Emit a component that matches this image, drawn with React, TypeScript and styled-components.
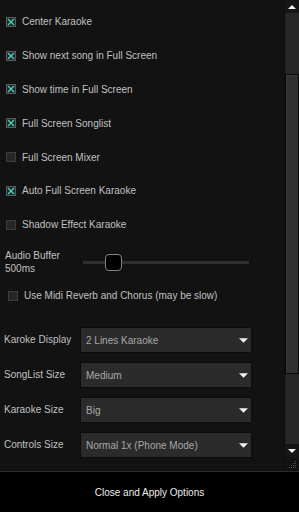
import React from 'react';
import styled, { createGlobalStyle } from 'styled-components';

const GlobalStyle = createGlobalStyle`
  html, body {
    margin: 0;
    padding: 0;
    background: #121212;
  }
  body {
    font-family: "Liberation Sans", Arial, sans-serif;
    font-size: 10px;
  }
`;

const Page = styled.div`
  width: 299px;
  height: 512px;
  display: flex;
  flex-direction: column;
  background: #121212;
  overflow: hidden;
`;

const Main = styled.div`
  flex: 1;
  display: flex;
  min-height: 0;
`;

const Content = styled.div`
  flex: 1;
  display: flex;
  flex-direction: column;
  padding-top: 5px;
`;

const CheckRow = styled.div<{ indent?: number; height?: number }>`
  height: ${p => p.height ?? 33.8}px;
  display: flex;
  align-items: center;
  gap: 6px;
  padding-left: ${p => p.indent ?? 6}px;
  color: #c0c0c0;
  font-size: 10px;
`;

const Box = styled.span<{ checked: boolean }>`
  width: 10px;
  height: 10px;
  box-sizing: border-box;
  border: 1px solid ${p => (p.checked ? '#5c5c5c' : '#3e3e3e')};
  background: ${p => (p.checked ? '#1f2a29' : '#262626')};
  display: flex;
  align-items: center;
  justify-content: center;
  flex-shrink: 0;
`;

const AudioRow = styled.div`
  height: 41px;
  display: flex;
  align-items: center;
  padding-left: 5px;
`;

const AudioLabel = styled.div`
  width: 78px;
  color: #c0c0c0;
  font-size: 10px;
  line-height: 13px;
`;

const Track = styled.div`
  position: relative;
  width: 166px;
  height: 3px;
  background: #2e2e2e;
`;

const Thumb = styled.div`
  position: absolute;
  top: -7px;
  width: 17px;
  height: 17px;
  box-sizing: border-box;
  background: #000;
  border: 1px solid #858585;
  border-radius: 4px;
`;

const SelectList = styled.div`
  margin-top: 18px;
  display: flex;
  flex-direction: column;
  gap: 9px;
`;

const SelectRow = styled.div`
  display: flex;
  align-items: center;
  height: 26px;
`;

const SelectLabel = styled.div`
  width: 76px;
  padding-left: 4px;
  color: #c0c0c0;
  font-size: 10px;
`;

const SelectBox = styled.div`
  width: 172px;
  height: 26px;
  box-sizing: border-box;
  display: flex;
  align-items: center;
  justify-content: space-between;
  padding: 1px 3px 0 5px;
  background: #2b2b2b;
  border: 1px solid #0c0c0c;
  color: #a8a8a8;
  font-size: 10px;
`;

const ScrollBar = styled.div`
  width: 14px;
  display: flex;
  flex-direction: column;
  border-left: 1px solid #0d0d0d;
`;

const ArrowBtn = styled.div`
  height: 13px;
  background: #161616;
  display: flex;
  align-items: center;
  justify-content: center;
`;

const ScrollTrack = styled.div`
  flex: 1;
  background: #272727;
  display: flex;
  flex-direction: column;
  padding-top: 61px;
  padding-bottom: 70px;
`;

const ScrollThumb = styled.div`
  flex: 1;
  box-sizing: border-box;
  background: #2f2f2f;
  border: 1px solid #080808;
  box-shadow: inset 1px 1px 0 #3c3c3c;
`;

const Grip = styled.div`
  height: 14px;
  background: #121212;
  display: flex;
  align-items: center;
  justify-content: flex-end;
  padding-right: 2px;
`;

const Footer = styled.div`
  height: 41px;
  box-sizing: border-box;
  border-top: 1px solid #2c2c2c;
  background: #000;
  display: flex;
  align-items: center;
  justify-content: center;
  color: #ececec;
  font-size: 10px;
`;

const Checkbox: React.FC<{ checked: boolean }> = ({ checked }) => (
  <Box checked={checked}>
    {checked && (
      <svg width="8" height="8" viewBox="0 0 8 8">
        <path d="M1 1 L7 7 M7 1 L1 7" stroke="#46d4c2" strokeWidth="1.3" />
      </svg>
    )}
  </Box>
);

const Triangle: React.FC<{ up?: boolean; w?: number; color?: string }> = ({ up, w = 9, color = '#f2f2f2' }) => (
  <svg width={w} height={Math.ceil(w / 2)} viewBox="0 0 10 5">
    <path d={up ? 'M0 5 L5 0 L10 5 Z' : 'M0 0 L10 0 L5 5 Z'} fill={color} />
  </svg>
);

const options = [
  { label: 'Center Karaoke', checked: true },
  { label: 'Show next song in Full Screen', checked: true },
  { label: 'Show time in Full Screen', checked: true },
  { label: 'Full Screen Songlist', checked: true },
  { label: 'Full Screen Mixer', checked: false },
  { label: 'Auto Full Screen Karaoke', checked: true },
  { label: 'Shadow Effect Karaoke', checked: false },
];

const selects = [
  { label: 'Karoke Display', value: '2 Lines Karaoke' },
  { label: 'SongList Size', value: 'Medium' },
  { label: 'Karaoke Size', value: 'Big' },
  { label: 'Controls Size', value: 'Normal 1x (Phone Mode)' },
];

export default function App() {
  const bufferPos = 0.13;
  return (
    <>
      <GlobalStyle />
      <Page>
        <Main>
          <Content>
            {options.map(o => (
              <CheckRow key={o.label}>
                <Checkbox checked={o.checked} />
                {o.label}
              </CheckRow>
            ))}
            <AudioRow>
              <AudioLabel>
                Audio Buffer
                <br />
                500ms
              </AudioLabel>
              <Track>
                <Thumb style={{ left: `${bufferPos * 166}px` }} />
              </Track>
            </AudioRow>
            <CheckRow indent={8} height={26}>
              <Checkbox checked={false} />
              Use Midi Reverb and Chorus (may be slow)
            </CheckRow>
            <SelectList>
              {selects.map(s => (
                <SelectRow key={s.label}>
                  <SelectLabel>{s.label}</SelectLabel>
                  <SelectBox>
                    {s.value}
                    <Triangle />
                  </SelectBox>
                </SelectRow>
              ))}
            </SelectList>
          </Content>
          <ScrollBar>
            <ArrowBtn>
              <Triangle up w={8} />
            </ArrowBtn>
            <ScrollTrack>
              <ScrollThumb />
            </ScrollTrack>
            <ArrowBtn>
              <Triangle w={8} />
            </ArrowBtn>
            <Grip>
              <svg width="9" height="9" viewBox="0 0 9 9">
                {[
                  [7, 1], [7, 3], [5, 3], [7, 5], [5, 5], [3, 5], [7, 7], [5, 7], [3, 7], [1, 7],
                ].map(([x, y]) => (
                  <rect key={`${x}-${y}`} x={x} y={y} width="1" height="1" fill="#5a5a5a" />
                ))}
              </svg>
            </Grip>
          </ScrollBar>
        </Main>
        <Footer>Close and Apply Options</Footer>
      </Page>
    </>
  );
}
